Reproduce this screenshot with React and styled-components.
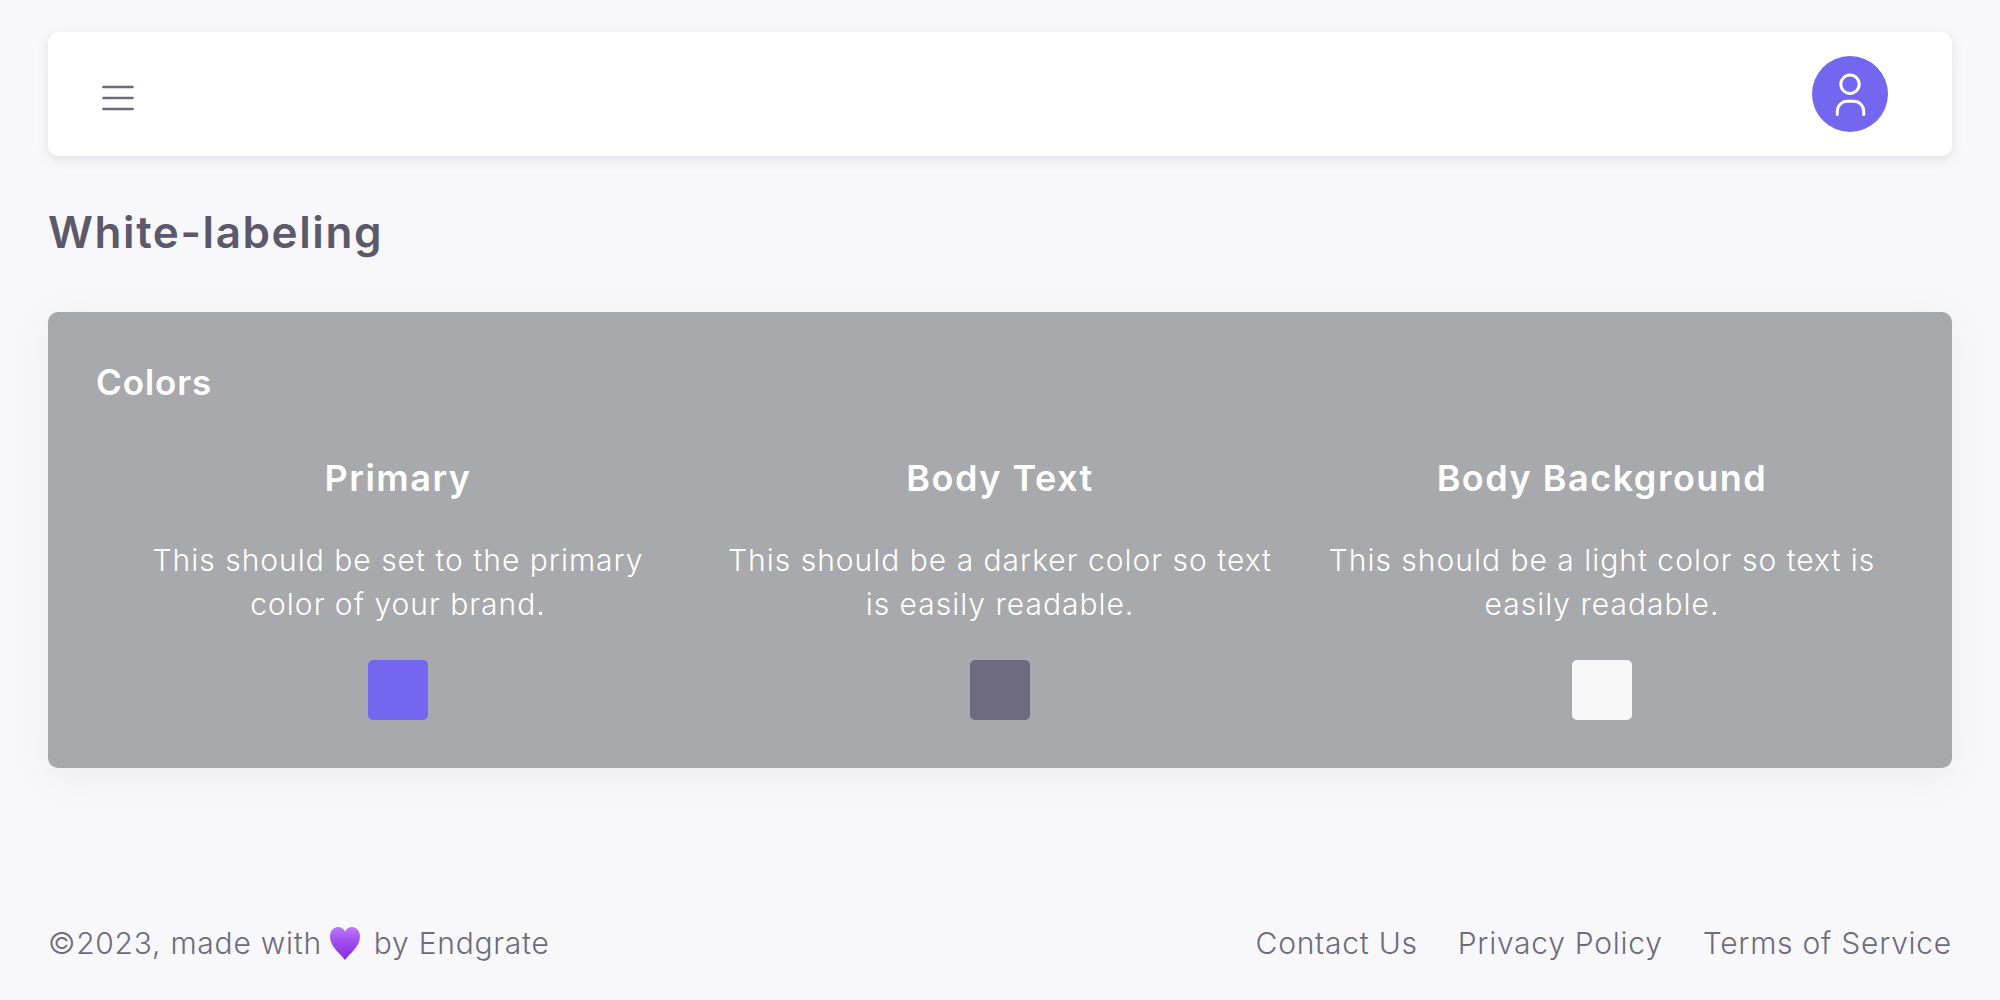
import React from 'react';
import styled, { createGlobalStyle } from 'styled-components';

const GlobalStyle = createGlobalStyle`
  html, body {
    margin: 0;
    padding: 0;
    background: #f8f8fa;
  }
  * {
    box-sizing: border-box;
  }
`;

const Page = styled.div`
  width: 100%;
  height: 1000px;
  padding: 32px 48px 0;
  display: flex;
  flex-direction: column;
  overflow: hidden;
  background: linear-gradient(180deg, #f8f7fc 0, #f8f8fa 140px);
  font-family: Inter, "Liberation Sans", sans-serif;
  color: #5e5b6e;
`;

const Navbar = styled.header`
  height: 124px;
  padding: 0 64px 0 54px;
  display: flex;
  align-items: center;
  justify-content: space-between;
  background: #fff;
  border-radius: 10px;
  box-shadow: 0 4px 12px rgba(75, 70, 92, 0.12);
`;

const MenuButton = styled.button`
  padding: 0;
  margin-top: 8px;
  border: 0;
  background: none;
  display: flex;
  color: #6d6b7d;
`;

const Avatar = styled.div`
  width: 76px;
  height: 76px;
  border-radius: 50%;
  background: #7367f0;
  display: flex;
  align-items: center;
  justify-content: center;
`;

const PageTitle = styled.h1`
  margin: 52px 0 0;
  height: 48px;
  font-size: 44px;
  line-height: 48px;
  font-weight: 600;
  letter-spacing: 1.6px;
  color: #5c596b;
`;

const Card = styled.section`
  margin-top: 56px;
  padding: 48px;
  background: #a8a9ac;
  border-radius: 10px;
  color: #fff;
  box-shadow: 0 8px 40px rgba(75, 70, 92, 0.07);
`;

const CardTitle = styled.h2`
  margin: 0;
  height: 44px;
  font-size: 35px;
  line-height: 44px;
  font-weight: 600;
  letter-spacing: 0.9px;
`;

const ColorGrid = styled.div`
  margin-top: 52px;
  padding: 0 1px;
  display: grid;
  grid-template-columns: repeat(3, 1fr);
`;

const ColorColumn = styled.div`
  padding: 0 24px;
  display: flex;
  flex-direction: column;
  align-items: center;
  text-align: center;
`;

const ColorName = styled.h3`
  margin: 0;
  height: 44px;
  font-size: 36px;
  line-height: 44px;
  font-weight: 600;
  letter-spacing: 1.5px;
`;

const ColorHint = styled.p`
  margin: 38px 0 0;
  font-size: 30px;
  line-height: 44px;
  font-weight: 300;
  letter-spacing: 1px;
  white-space: nowrap;
`;

const Swatch = styled.div`
  margin-top: 34px;
  width: 60px;
  height: 60px;
  border-radius: 5px;
  background: ${(props) => props.$color};
`;

const Footer = styled.footer`
  margin-top: 153px;
  height: 44px;
  display: flex;
  align-items: center;
  justify-content: space-between;
  font-size: 30px;
  font-weight: 300;
  letter-spacing: 0.75px;
  color: #6d6b7d;
`;

const Copyright = styled.div`
  display: flex;
  align-items: center;
`;

const Heart = styled.svg`
  margin: 0 14px 0 8px;
`;

const FooterLinks = styled.nav`
  display: flex;
  gap: 40px;
`;

const FooterLink = styled.a`
  color: inherit;
  text-decoration: none;
`;

const colors = [
  { name: 'Primary', hint: ['This should be set to the primary', 'color of your brand.'], color: '#7367f0' },
  { name: 'Body Text', hint: ['This should be a darker color so text', 'is easily readable.'], color: '#6d6b7d' },
  { name: 'Body Background', hint: ['This should be a light color so text is', 'easily readable.'], color: '#f8f8f8' },
];

const App = () => {
  return (
    <Page>
      <GlobalStyle />
      <Navbar>
        <MenuButton aria-label="Menu">
          <svg width="32" height="26" viewBox="0 0 32 26" fill="none" stroke="currentColor" strokeWidth="2.7" strokeLinecap="round">
            <path d="M1.500 2h29M1.500 13h29M1.500 24h29" />
          </svg>
        </MenuButton>
        <Avatar>
          <svg width="32" height="44" viewBox="0 0 32 44" fill="none" stroke="#fff" strokeWidth="3" strokeLinecap="round">
            <circle cx="16" cy="12.300" r="9.200" />
            <path d="M3.300 42.500v-3.200a10 10 0 0 1 10-10h6.400a10 10 0 0 1 10 10v3.200" />
          </svg>
        </Avatar>
      </Navbar>
      <PageTitle>White-labeling</PageTitle>
      <Card>
        <CardTitle>Colors</CardTitle>
        <ColorGrid>
          {colors.map((item) => (
            <ColorColumn key={item.name}>
              <ColorName>{item.name}</ColorName>
              <ColorHint>
                {item.hint[0]}
                <br />
                {item.hint[1]}
              </ColorHint>
              <Swatch $color={item.color} />
            </ColorColumn>
          ))}
        </ColorGrid>
      </Card>
      <Footer>
        <Copyright>
          ©2023, made with
          <Heart width="30" height="33" viewBox="0 0 30 33">
            <defs>
              <linearGradient id="heartFill" x1="0" y1="0" x2="0" y2="1">
                <stop offset="0" stopColor="#bb7af8" />
                <stop offset="0.45" stopColor="#a04df0" />
                <stop offset="1" stopColor="#8a2be2" />
              </linearGradient>
            </defs>
            <path d="M15 33C11 27 0 20 0 9.500 0 4 3.500 0 8.200 0 11 0 13.500 1.500 15 4.500 16.500 1.500 19 0 21.800 0 26.500 0 30 4 30 9.500 30 20 19 27 15 33z" fill="url(#heartFill)" />
          </Heart>
          by Endgrate
        </Copyright>
        <FooterLinks>
          <FooterLink href="#">Contact Us</FooterLink>
          <FooterLink href="#">Privacy Policy</FooterLink>
          <FooterLink href="#">Terms of Service</FooterLink>
        </FooterLinks>
      </Footer>
    </Page>
  );
};

export default App;
